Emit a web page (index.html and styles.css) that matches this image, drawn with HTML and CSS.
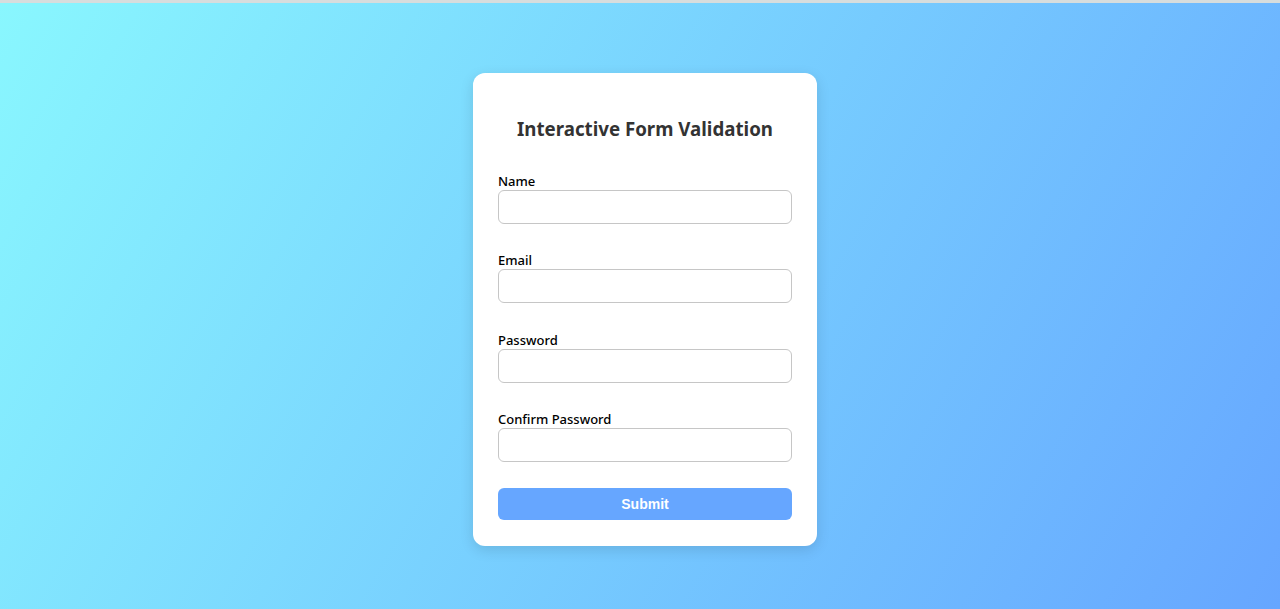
FILE: index.html
```html
<!DOCTYPE html>
<html lang="en">
<head>
<meta charset="utf-8">
<title>Interactive Form Validation</title>
<link rel="stylesheet" href="styles.css">
</head>
<body>
<div class="card">
  <h2 class="title">Interactive Form Validation</h2>
  <form class="form">
    <div class="fields">
      <div class="field">
        <label class="label" for="name">Name</label>
        <input class="input" id="name" type="text">
      </div>
      <div class="field">
        <label class="label" for="email">Email</label>
        <input class="input" id="email" type="email">
      </div>
      <div class="field">
        <label class="label" for="password">Password</label>
        <input class="input" id="password" type="password">
      </div>
      <div class="field">
        <label class="label" for="confirm">Confirm Password</label>
        <input class="input" id="confirm" type="password">
      </div>
    </div>
    <button class="submit" type="button">Submit</button>
  </form>
</div>
</body>
</html>
```
FILE: styles.css
```css
* { box-sizing: border-box; }
html, body { height: 100%; }
body {
  margin: 0;
  border-top: 3px solid #d7dddd;
  background: linear-gradient(120deg, #89f7fe 0%, #66a6ff 100%);
  font-family: "Noto Sans", "Open Sans", sans-serif;
  display: flex;
  justify-content: center;
  align-items: flex-start;
  padding-top: 70px;
  padding-left: 10px;
}
.card {
  width: 344px;
  background: #fff;
  border-radius: 12px;
  padding: 25px 25px 26px;
  box-shadow: 0 4px 14px rgba(0, 0, 0, 0.12);
}
.title {
  margin: 17px 0 31px;
  font-size: 18.7px;
  line-height: 27px;
  font-weight: 700;
  color: #333;
  text-align: center;
}
.form { display: flex; flex-direction: column; }
.fields { display: flex; flex-direction: column; gap: 28.3px; }
.field { display: flex; flex-direction: column; }
.label {
  font-size: 13px;
  line-height: 17px;
  font-weight: 500;
  color: #000;
}
.input {
  height: 34px;
  width: 100%;
  border: 1px solid #c6c6c6;
  border-radius: 6px;
  padding: 6px 8px;
  font: inherit;
}
.submit {
  margin-top: 26px;
  height: 32px;
  border: none;
  border-radius: 6px;
  background: #66a6ff;
  color: #fff;
  font-family: "Liberation Sans", Arial, sans-serif;
  font-weight: 700;
  font-size: 14px;
}
```
